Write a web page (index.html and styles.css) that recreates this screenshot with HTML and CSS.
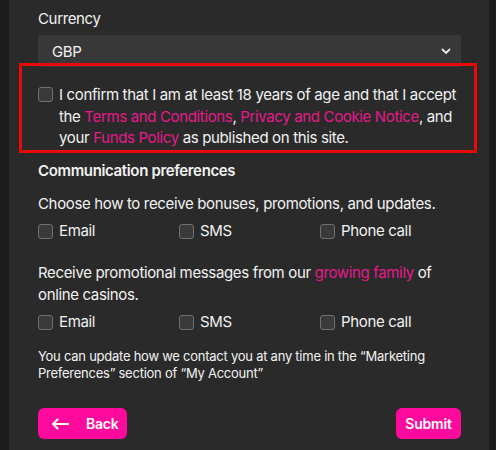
FILE: index.html
```html
<!DOCTYPE html>
<html lang="en">
<head>
<meta charset="utf-8">
<link rel="stylesheet" href="styles.css">
</head>
<body>
<div class="panel">
  <div class="label">Currency</div>
  <div class="select">
    <span>GBP</span>
    <svg class="chev" width="10" height="7" viewBox="0 0 10 7"><path d="M1.5 1.5 L5 5 L8.5 1.5" fill="none" stroke="#e8e8e8" stroke-width="1.8" stroke-linecap="round" stroke-linejoin="round"/></svg>
  </div>
  <div class="consent">
    <span class="cb"></span>
    <p class="consent-text">I confirm that I am at least 18 years of age and that I accept the <a>Terms and Conditions</a>, <a>Privacy and Cookie Notice</a>, and your <a>Funds Policy</a> as published on this site.</p>
  </div>
  <h3 class="heading">Communication preferences</h3>
  <p class="para p1">Choose how to receive bonuses, promotions, and updates.</p>
  <div class="opts">
    <div class="opt"><span class="cb"></span><span>Email</span></div>
    <div class="opt"><span class="cb"></span><span>SMS</span></div>
    <div class="opt"><span class="cb"></span><span>Phone call</span></div>
  </div>
  <p class="para p2">Receive promotional messages from our <a>growing family</a> of online casinos.</p>
  <div class="opts">
    <div class="opt"><span class="cb"></span><span>Email</span></div>
    <div class="opt"><span class="cb"></span><span>SMS</span></div>
    <div class="opt"><span class="cb"></span><span>Phone call</span></div>
  </div>
  <p class="small">You can update how we contact you at any time in the “Marketing Preferences” section of “My Account”</p>
  <div class="actions">
    <button class="btn back"><svg width="18" height="12" viewBox="0 0 18 12"><path d="M17 6 H2 M6.5 1.5 L2 6 L6.5 10.5" fill="none" stroke="#fff" stroke-width="2" stroke-linecap="round" stroke-linejoin="round"/></svg><span>Back</span></button>
    <button class="btn submit">Submit</button>
  </div>
</div>
</body>
</html>
```
FILE: styles.css
```css
* { box-sizing: border-box; }
html, body { margin: 0; padding: 0; }
body {
  background: #1d1d1d;
  font-family: Inter, "Noto Sans", sans-serif;
  color: #f2f2f2;
  height: 450px;
  overflow: hidden;
  letter-spacing: -0.35px;
}
.panel {
  margin: 0 7px 0 9px;
  background: #2a2a2a;
  height: 450px;
  padding: 8px 28px 0 29px;
}
.label {
  font-size: 15px;
  line-height: 22px;
  font-weight: 400;
}
.select {
  margin-top: 5px;
  height: 32px;
  background: #383838;
  border-radius: 3px;
  display: flex;
  align-items: center;
  justify-content: space-between;
  padding: 0 10px 0 14px;
  font-size: 15px;
  font-weight: 400;
}
.consent {
  margin: -4px -16px 0 -19px;
  border: 3px solid #e8070b;
  display: flex;
  align-items: flex-start;
  gap: 6px;
  padding: 18px 12px 1px 16px;
}
.consent .cb { margin-top: 3px; }
.consent-text {
  margin: 0;
  font-size: 15px;
  line-height: 21.5px;
  font-weight: 400;
}
a { color: #e5198c; }
.cb {
  flex: none;
  width: 15px;
  height: 15px;
  border: 1.5px solid #707070;
  border-radius: 3px;
  background: #3a3a3a;
}
.heading {
  margin: 7px 0 0;
  font-size: 15px;
  line-height: 22px;
  font-weight: 600;
}
.para {
  margin: 0;
  font-size: 15px;
  line-height: 21.5px;
  font-weight: 400;
}
.p1 { margin-top: 11px; }
.p2 { margin-top: 20px; }
.opts {
  display: grid;
  grid-template-columns: 141px 141px 141px;
  margin-top: 6px;
  font-size: 15px;
  line-height: 22px;
  font-weight: 400;
}
.p2 + .opts { margin-top: 6px; }
.opt {
  display: flex;
  align-items: center;
  gap: 6px;
}
.small {
  margin: 15px 0 0;
  font-size: 13px;
  line-height: 17px;
  font-weight: 400;
  letter-spacing: -0.25px;
}
.actions {
  margin-top: 26px;
  display: flex;
  justify-content: space-between;
}
.btn {
  font-family: Inter, "Noto Sans", sans-serif;
  border: none;
  background: #ff0a9c;
  color: #fff;
  height: 31px;
  border-radius: 6px;
  font-size: 14px;
  font-weight: 600;
  letter-spacing: -0.2px;
  display: flex;
  align-items: center;
}
.back {
  width: 89px;
  padding: 0 0 0 13px;
  gap: 17px;
}
.submit {
  width: 65px;
  justify-content: center;
  padding: 0;
}
```
